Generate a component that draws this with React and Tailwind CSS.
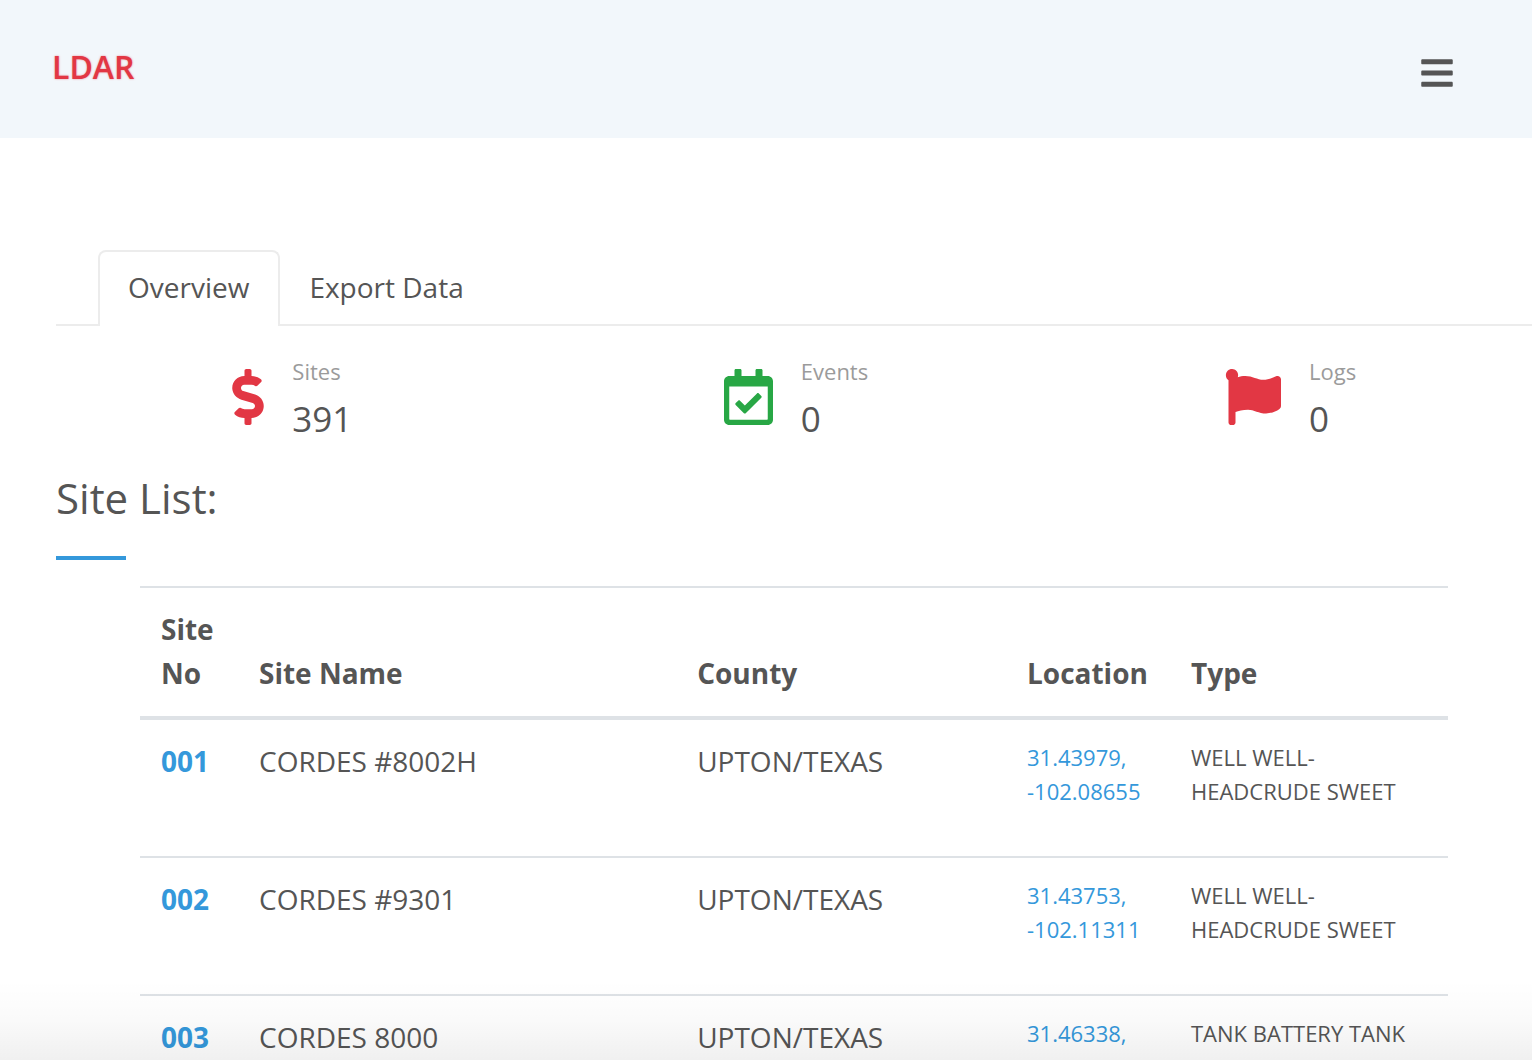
import React from "react";
import { FaBars, FaDollarSign, FaFlag, FaRegCalendarCheck } from "react-icons/fa";

const stats = [
  { label: "Sites", value: "391", icon: FaDollarSign, style: "w-8 text-[#e23744]" },
  { label: "Events", value: "0", icon: FaRegCalendarCheck, style: "w-[49px] text-[#28a745]" },
  { label: "Logs", value: "0", icon: FaFlag, style: "w-14 text-[#e23744]" },
];

const sites = [
  { no: "001", name: "CORDES #8002H", county: "UPTON/TEXAS", location: ["31.43979,", "-102.08655"], type: "WELL WELL-HEADCRUDE SWEET" },
  { no: "002", name: "CORDES #9301", county: "UPTON/TEXAS", location: ["31.43753,", "-102.11311"], type: "WELL WELL-HEADCRUDE SWEET" },
  { no: "003", name: "CORDES 8000", county: "UPTON/TEXAS", location: ["31.46338,", "-102.09963"], type: "TANK BATTERY TANK BATTERYCRUDE SWEET" },
];

const Header = () => (
  <header className="flex h-[138px] items-center justify-between bg-[#f2f7fb] pl-[52px] pr-[77px]">
    <a href="#" className="pb-1 text-[32px] font-semibold leading-10 text-[#e23744] text-shadow-[0_0_2px_#e2374499]">
      LDAR
    </a>
    <button type="button" aria-label="Toggle menu" className="pt-2">
      <FaBars className="size-9" />
    </button>
  </header>
);

const Tabs = () => (
  <nav className="ml-14 flex border-b-2 border-[#ececec] pl-[42px]">
    <button type="button" className="-mb-0.5 h-[76px] rounded-t-lg border-2 border-b-0 border-[#ececec] bg-white pr-[29px] pb-1 pl-7">
      Overview
    </button>
    <button type="button" className="px-[29px]">
      Export Data
    </button>
  </nav>
);

const Stat = ({ label, value, icon: Icon, style }) => (
  <div className="flex items-start justify-center gap-7">
    <Icon className={`mt-3.5 h-14 ${style}`} />
    <div>
      <div className="text-[22px] leading-8 text-[#9b9b9b]">{label}</div>
      <div className="mt-2 text-[35px] leading-12">{value}</div>
    </div>
  </div>
);

const SiteTable = () => (
  <table className="w-full table-fixed border-separate border-spacing-0 border-t-2 border-[#dee2e6] text-left">
    <colgroup>
      <col className="w-[98px]" />
      <col className="w-[33.5%]" />
      <col />
      <col className="w-[164px]" />
      <col className="w-[278px]" />
    </colgroup>
    <thead>
      <tr className="align-bottom">
        {["Site No", "Site Name", "County", "Location", "Type"].map((title) => (
          <th key={title} className="border-b-4 border-[#dee2e6] pt-[19px] pb-[21px] pl-[21px] font-bold">
            {title}
          </th>
        ))}
      </tr>
    </thead>
    <tbody className="leading-[42px]">
      {sites.map((site) => (
        <tr key={site.no} className="align-top *:border-[#dee2e6] *:py-5 *:pl-[21px] not-first:*:border-t-2">
          <td>
            <a href="#" className="font-bold text-[#3498db]">{site.no}</a>
          </td>
          <td>{site.name}</td>
          <td>{site.county}</td>
          <td>
            <a href="#" className="mb-7 block text-[22px] leading-[34px] text-[#3498db]">
              {site.location[0]}
              <br />
              {site.location[1]}
            </a>
          </td>
          <td className="pr-[21px]">
            <p className="mb-7 text-[22px] leading-[34px]">{site.type}</p>
          </td>
        </tr>
      ))}
    </tbody>
  </table>
);

const App = () => {
  return (
    <div className="relative h-screen overflow-hidden bg-white font-['Open_Sans',sans-serif] text-[28px] leading-[44px] text-[#555]">
      <Header />
      <main className="pt-28">
        <Tabs />
        <section className="grid grid-cols-[500fr_506fr_482fr] pt-[29px] pl-[42px]">
          {stats.map((stat) => (
            <Stat key={stat.label} {...stat} />
          ))}
        </section>
        <section className="pt-[25px] pl-14 pr-[84px]">
          <h1 className="text-[42px] leading-[60px]">Site List:</h1>
          <div className="mt-7 h-1 w-[70px] bg-[#3498db]" />
          <div className="mt-[26px] pl-[84px]">
            <SiteTable />
          </div>
        </section>
      </main>
      <div className="pointer-events-none absolute inset-x-0 bottom-0 h-20 bg-linear-to-t from-black/6 via-black/2 to-transparent" />
    </div>
  );
};

export default App;
